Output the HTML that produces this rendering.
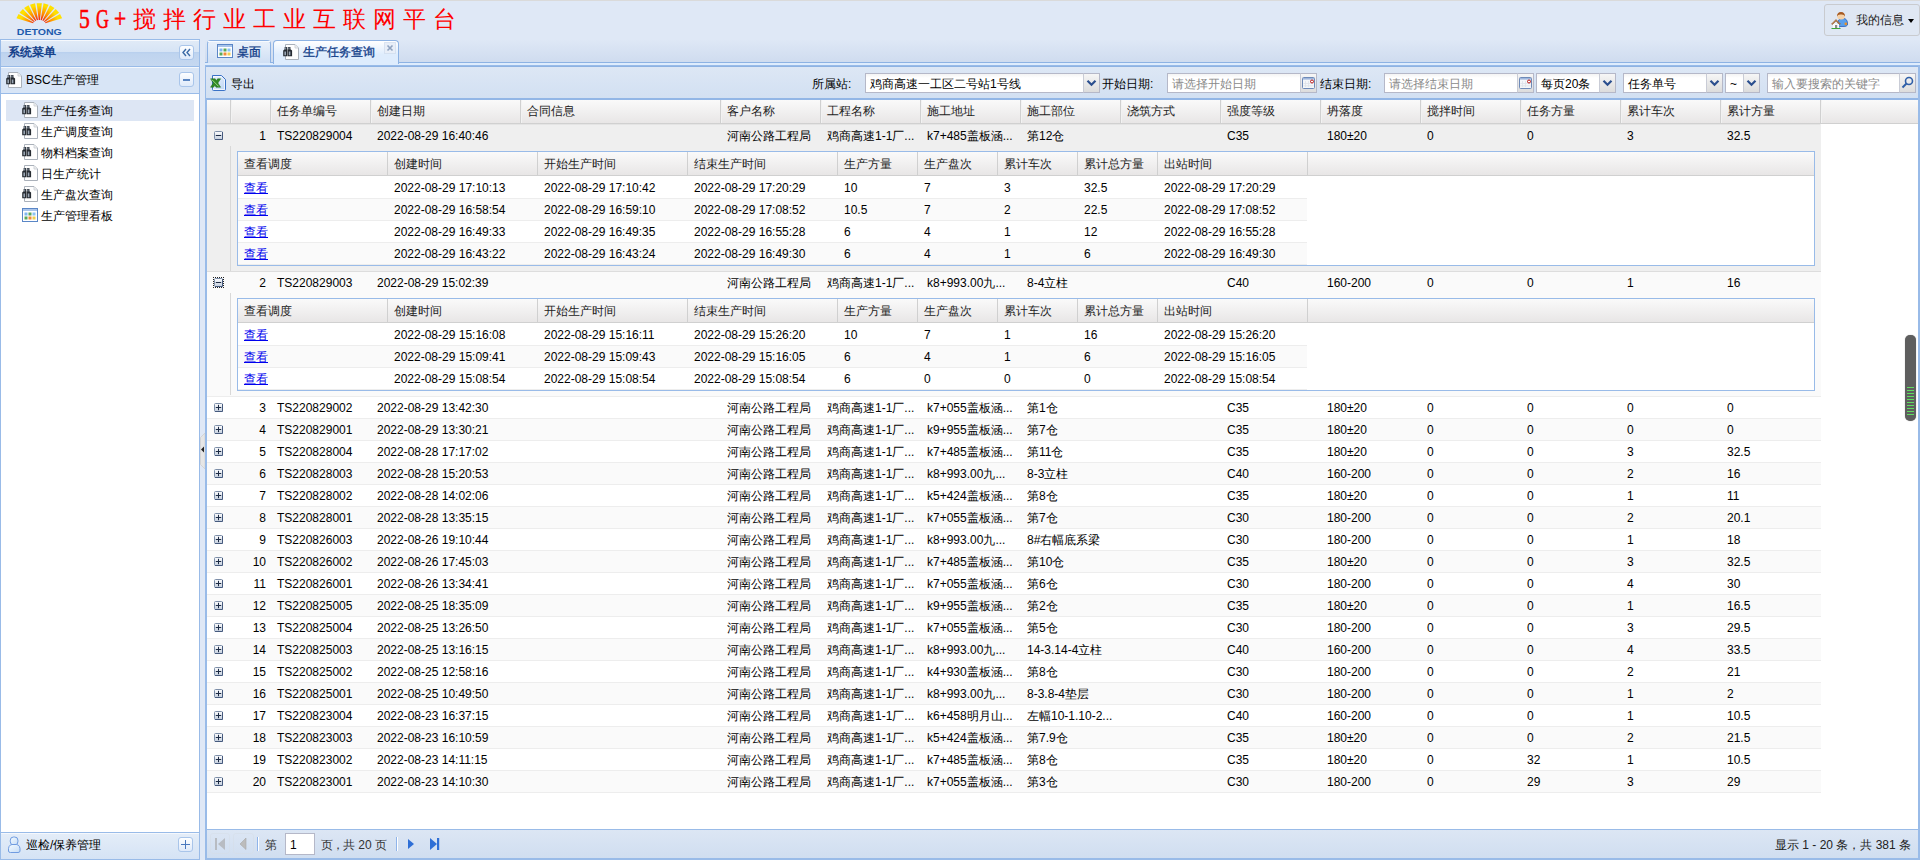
<!DOCTYPE html><html><head><meta charset="utf-8"><title>5G+</title><style>
*{margin:0;padding:0;box-sizing:border-box;}
html,body{width:1920px;height:860px;overflow:hidden;}
body{position:relative;background:#dfe8f6;font-family:"Liberation Sans",sans-serif;font-size:12px;color:#000;}
.a{position:absolute;}
.t{position:absolute;white-space:nowrap;line-height:14px;}
.bd{border:1px solid #99bbe8;}
</style></head><body><div class="a" style="left:0;top:0;width:1920px;height:1px;background:#dadada"></div><svg class="a" style="left:10px;top:0px" width="60" height="40" viewBox="0 0 60 40"><defs><radialGradient id="lg" gradientUnits="userSpaceOnUse" cx="29.3" cy="25" r="23"><stop offset="0.25" stop-color="#ee2a10"/><stop offset="0.5" stop-color="#ff8a00"/><stop offset="0.85" stop-color="#ffe000"/></radialGradient></defs><g fill="url(#lg)"><polygon points="23.15,23.37 6.44,18.31 8.58,13.90 23.61,22.58"/><polygon points="24.01,22.10 9.45,12.63 12.87,8.96 24.74,21.43"/><polygon points="25.30,21.06 14.10,7.98 18.52,5.35 26.25,20.59"/><polygon points="26.92,20.35 20.00,4.72 25.05,3.35 28.00,20.10"/><polygon points="28.73,20.02 26.67,3.13 31.93,3.13 29.87,20.02"/><polygon points="30.60,20.10 33.55,3.35 38.60,4.72 31.68,20.35"/><polygon points="32.35,20.59 40.08,5.35 44.50,7.98 33.30,21.06"/><polygon points="33.86,21.43 45.73,8.96 49.15,12.63 34.59,22.10"/><polygon points="34.99,22.58 50.02,13.90 52.16,18.31 35.45,23.37"/></g><text x="29.3" y="35" text-anchor="middle" font-family="Liberation Sans" font-weight="bold" font-size="9" fill="#1f5cae" textLength="45" lengthAdjust="spacingAndGlyphs">DETONG</text></svg><div class="t" style="left:79px;top:3px;font-family:'Liberation Serif',serif;font-size:27px;line-height:32px;color:#f00;font-weight:normal;-webkit-text-stroke:0.6px #f00;transform:scaleX(0.8);transform-origin:0 0">5</div><div class="t" style="left:96px;top:3px;font-family:'Liberation Serif',serif;font-size:27px;line-height:32px;color:#f00;font-weight:normal;-webkit-text-stroke:0.6px #f00;transform:scaleX(0.66);transform-origin:0 0">G</div><div class="t" style="left:114px;top:3px;font-family:'Liberation Serif',serif;font-size:27px;line-height:32px;color:#f00;font-weight:normal;-webkit-text-stroke:0.6px #f00;transform:scaleX(0.8);transform-origin:0 0">+</div><div class="t" style="left:133px;top:5px;font-family:'Liberation Serif',serif;font-size:23px;line-height:30px;color:#f00;letter-spacing:7px;font-weight:500">搅拌行业工业互联网平台</div><div class="a" style="left:1824px;top:4px;width:96px;height:32px;border:1px solid #c9cbcf;border-radius:3px;background:#dfe7f3"></div><svg class="a" style="left:1831px;top:11px" width="18" height="18" viewBox="0 0 18 18"><path d="M7 17 V12 Q7 7.5 11 7.5 H12.5 Q16 7.5 16.5 12 V14 Q15.5 15.5 13 15.5 H9z" fill="#5aa0ec" stroke="#2c5fb8" stroke-width="0.8"/><circle cx="14.8" cy="12.8" r="1.4" fill="#e8902a"/><rect x="6.2" y="1.5" width="7.6" height="7" rx="3.5" fill="#f6d2a8"/><path d="M6 5.5 Q6 1 10 1 Q14 1 14 5.5 Q13 3 10 3.5 Q7 3 6 5.5z" fill="#a65a22"/><path d="M2 12.5 V17 H8 V12.5z" fill="#fafafa"/><path d="M0.5 13 L5 8.5 L9.5 13 L8.5 13.5 L5 10 L1.5 13.5z" fill="#b57a45" stroke="#9a6335" stroke-width="0.6"/><rect x="4" y="14" width="2.2" height="3" fill="#8a8a8a"/><rect x="0.5" y="17" width="9" height="1" fill="#3aa53a"/></svg><div class="t" style="left:1856px;top:13px;color:#222">我的信息</div><div class="a" style="left:1908px;top:19px;width:0;height:0;border-left:3.5px solid transparent;border-right:3.5px solid transparent;border-top:4px solid #000"></div><div class="a" style="left:0;top:39px;width:200px;height:821px;border:1px solid #99bbe8;border-bottom:none;background:#fff"></div><div class="a" style="left:1px;top:40px;width:198px;height:26px;background:linear-gradient(to bottom,#e0eaf7 0%,#d6e4f5 44%,#b9d0ee 46%,#bfd4ef 52%,#c5d8f0 100%);border-top:1px solid #f6f9fd"></div><div class="a" style="left:1px;top:66px;width:198px;height:1px;background:#99bbe8"></div><div class="t" style="left:8px;top:45px;font-weight:bold;color:#15428b">系统菜单</div><div class="a" style="left:179px;top:45px;width:15px;height:15px;border:1px solid #a9c5ea;border-radius:3px;background:linear-gradient(#fdfeff,#dfeafa)"></div><svg class="a" style="left:179px;top:45px" width="15" height="15" viewBox="0 0 15 15"><path d="M7 4 L4 7.5 L7 11 M11 4 L8 7.5 L11 11" fill="none" stroke="#3b6aa6" stroke-width="1.4"/></svg><div class="a" style="left:1px;top:67px;width:198px;height:26px;background:#d8e5f6;border-top:1px solid #f4f8fd"></div><div class="a" style="left:1px;top:93px;width:198px;height:1px;background:#99bbe8"></div><svg class="a" style="left:6px;top:72px" width="16" height="16" viewBox="0 0 16 16"><path d="M2.5 0.5 H12 L15.5 4 V15.5 H2.5z" fill="#fefefe" stroke="#aab1ba"/><path d="M12 0.8 V4 H15.2" fill="#f0f0f0" stroke="#c6ccd3" stroke-width="0.8"/><path d="M1.6 3 h2.6 v3 h-2.6z M4.9 3 h2.6 v3 h-2.6z" fill="#3a4048"/><path d="M0.2 12.2 V6.5 L1.4 5.6 h3 v6.6z M4.8 12.2 V5.6 h3 l1.3 0.9 v5.7z" fill="#262b31"/><path d="M1.4 7.5 h1.6 v3.8 h-1.6z M5.8 7.5 h1.6 v3.8 h-1.6z" fill="#9aa6b4"/><path d="M2 3.6 h1 v1.8 h-1z M5.4 3.6 h1 v1.8 h-1z" fill="#7d8a99"/></svg><div class="t" style="left:26px;top:73px;">BSC生产管理</div><div class="a" style="left:179px;top:72px;width:15px;height:15px;border:1px solid #a9c5ea;border-radius:3px;background:linear-gradient(#fdfeff,#dfeafa)"></div><div class="a" style="left:183px;top:79px;width:7px;height:2px;background:#5b86c2"></div><div class="a" style="left:6px;top:100px;width:188px;height:21px;background:#dde6f4"></div><svg class="a" style="left:22px;top:102px" width="16" height="16" viewBox="0 0 16 16"><path d="M2.5 0.5 H12 L15.5 4 V15.5 H2.5z" fill="#fefefe" stroke="#aab1ba"/><path d="M12 0.8 V4 H15.2" fill="#f0f0f0" stroke="#c6ccd3" stroke-width="0.8"/><path d="M1.6 3 h2.6 v3 h-2.6z M4.9 3 h2.6 v3 h-2.6z" fill="#3a4048"/><path d="M0.2 12.2 V6.5 L1.4 5.6 h3 v6.6z M4.8 12.2 V5.6 h3 l1.3 0.9 v5.7z" fill="#262b31"/><path d="M1.4 7.5 h1.6 v3.8 h-1.6z M5.8 7.5 h1.6 v3.8 h-1.6z" fill="#9aa6b4"/><path d="M2 3.6 h1 v1.8 h-1z M5.4 3.6 h1 v1.8 h-1z" fill="#7d8a99"/></svg><div class="t" style="left:41px;top:104px;">生产任务查询</div><svg class="a" style="left:22px;top:123px" width="16" height="16" viewBox="0 0 16 16"><path d="M2.5 0.5 H12 L15.5 4 V15.5 H2.5z" fill="#fefefe" stroke="#aab1ba"/><path d="M12 0.8 V4 H15.2" fill="#f0f0f0" stroke="#c6ccd3" stroke-width="0.8"/><path d="M1.6 3 h2.6 v3 h-2.6z M4.9 3 h2.6 v3 h-2.6z" fill="#3a4048"/><path d="M0.2 12.2 V6.5 L1.4 5.6 h3 v6.6z M4.8 12.2 V5.6 h3 l1.3 0.9 v5.7z" fill="#262b31"/><path d="M1.4 7.5 h1.6 v3.8 h-1.6z M5.8 7.5 h1.6 v3.8 h-1.6z" fill="#9aa6b4"/><path d="M2 3.6 h1 v1.8 h-1z M5.4 3.6 h1 v1.8 h-1z" fill="#7d8a99"/></svg><div class="t" style="left:41px;top:125px;">生产调度查询</div><svg class="a" style="left:22px;top:144px" width="16" height="16" viewBox="0 0 16 16"><path d="M2.5 0.5 H12 L15.5 4 V15.5 H2.5z" fill="#fefefe" stroke="#aab1ba"/><path d="M12 0.8 V4 H15.2" fill="#f0f0f0" stroke="#c6ccd3" stroke-width="0.8"/><path d="M1.6 3 h2.6 v3 h-2.6z M4.9 3 h2.6 v3 h-2.6z" fill="#3a4048"/><path d="M0.2 12.2 V6.5 L1.4 5.6 h3 v6.6z M4.8 12.2 V5.6 h3 l1.3 0.9 v5.7z" fill="#262b31"/><path d="M1.4 7.5 h1.6 v3.8 h-1.6z M5.8 7.5 h1.6 v3.8 h-1.6z" fill="#9aa6b4"/><path d="M2 3.6 h1 v1.8 h-1z M5.4 3.6 h1 v1.8 h-1z" fill="#7d8a99"/></svg><div class="t" style="left:41px;top:146px;">物料档案查询</div><svg class="a" style="left:22px;top:165px" width="16" height="16" viewBox="0 0 16 16"><path d="M2.5 0.5 H12 L15.5 4 V15.5 H2.5z" fill="#fefefe" stroke="#aab1ba"/><path d="M12 0.8 V4 H15.2" fill="#f0f0f0" stroke="#c6ccd3" stroke-width="0.8"/><path d="M1.6 3 h2.6 v3 h-2.6z M4.9 3 h2.6 v3 h-2.6z" fill="#3a4048"/><path d="M0.2 12.2 V6.5 L1.4 5.6 h3 v6.6z M4.8 12.2 V5.6 h3 l1.3 0.9 v5.7z" fill="#262b31"/><path d="M1.4 7.5 h1.6 v3.8 h-1.6z M5.8 7.5 h1.6 v3.8 h-1.6z" fill="#9aa6b4"/><path d="M2 3.6 h1 v1.8 h-1z M5.4 3.6 h1 v1.8 h-1z" fill="#7d8a99"/></svg><div class="t" style="left:41px;top:167px;">日生产统计</div><svg class="a" style="left:22px;top:186px" width="16" height="16" viewBox="0 0 16 16"><path d="M2.5 0.5 H12 L15.5 4 V15.5 H2.5z" fill="#fefefe" stroke="#aab1ba"/><path d="M12 0.8 V4 H15.2" fill="#f0f0f0" stroke="#c6ccd3" stroke-width="0.8"/><path d="M1.6 3 h2.6 v3 h-2.6z M4.9 3 h2.6 v3 h-2.6z" fill="#3a4048"/><path d="M0.2 12.2 V6.5 L1.4 5.6 h3 v6.6z M4.8 12.2 V5.6 h3 l1.3 0.9 v5.7z" fill="#262b31"/><path d="M1.4 7.5 h1.6 v3.8 h-1.6z M5.8 7.5 h1.6 v3.8 h-1.6z" fill="#9aa6b4"/><path d="M2 3.6 h1 v1.8 h-1z M5.4 3.6 h1 v1.8 h-1z" fill="#7d8a99"/></svg><div class="t" style="left:41px;top:188px;">生产盘次查询</div><svg class="a" style="left:22px;top:207px" width="16" height="16" viewBox="0 0 16 16"><rect x="0.5" y="1.5" width="15" height="13" fill="#fff" stroke="#5a86c6"/><rect x="1" y="2" width="14" height="2" fill="#a9c4ea"/><rect x="2.5" y="5.5" width="3" height="3" fill="#7fb7f0"/><rect x="6.5" y="5.5" width="3" height="3" fill="#5aa85a"/><rect x="10.5" y="5.5" width="3" height="3" fill="#8cc4f4"/><rect x="2.5" y="9.5" width="3" height="3" fill="#5aa85a"/><rect x="6.5" y="9.5" width="3" height="3" fill="#f08a3a"/><rect x="10.5" y="9.5" width="3" height="3" fill="#eed050"/></svg><div class="t" style="left:41px;top:209px;">生产管理看板</div><div class="a" style="left:1px;top:832px;width:198px;height:28px;background:linear-gradient(#e4edf8,#d5e3f5);border-top:1px solid #99bbe8;border-bottom:1px solid #99bbe8"></div><div class="a" style="left:1px;top:833px;width:198px;height:1px;background:#f5f8fd"></div><svg class="a" style="left:7px;top:836px" width="15" height="18" viewBox="0 0 15 18"><defs><linearGradient id="pg" x1="0" y1="0" x2="1" y2="1"><stop offset="0" stop-color="#f4fbff"/><stop offset="1" stop-color="#c6dcf6"/></linearGradient></defs><rect x="3.3" y="1" width="7.6" height="8" rx="3.2" fill="url(#pg)" stroke="#6f9be0"/><path d="M1.5 15 Q1 9 5 8.5 H9.5 Q13.5 9 13 15 Q13 16.5 11 16.5 H3.5 Q1.5 16.5 1.5 15z" fill="url(#pg)" stroke="#6f9be0"/></svg><div class="t" style="left:26px;top:838px;">巡检/保养管理</div><div class="a" style="left:178px;top:837px;width:15px;height:15px;border:1px solid #a9c5ea;border-radius:3px;background:linear-gradient(#fdfeff,#dfeafa)"></div><div class="a" style="left:181px;top:844px;width:9px;height:1px;background:#4a78be"></div><div class="a" style="left:185px;top:840px;width:1px;height:9px;background:#4a78be"></div><svg class="a" style="left:200px;top:433px" width="5" height="36" viewBox="0 0 5 36"><path d="M5 0 L0.5 4.5 V31.5 L5 36z" fill="#e6e6e6" stroke="#cfcfcf" stroke-width="0.8"/><path d="M1 16.5 L4 13.5 V19.5z" fill="#222"/></svg><div class="a" style="left:205px;top:39px;width:1715px;height:23px;background:linear-gradient(#dfe8f6,#cfdcef)"></div><div class="a" style="left:205px;top:62px;width:1715px;height:1px;background:#8db2e3"></div><div class="a" style="left:205px;top:63px;width:1715px;height:3px;background:#deecfd"></div><div class="a" style="left:207px;top:40px;width:64px;height:23px;border:1px solid #8db2e3;border-bottom:none;border-radius:4px 4px 0 0;background:linear-gradient(#eaf1fb,#cfdff4)"></div><div class="a" style="left:208px;top:41px;width:62px;height:1px;background:#f8fbfe"></div><svg class="a" style="left:217px;top:43px" width="16" height="16" viewBox="0 0 16 16"><rect x="0.5" y="1.5" width="15" height="13" fill="#fff" stroke="#5a86c6"/><rect x="1" y="2" width="14" height="2" fill="#a9c4ea"/><rect x="2.5" y="5.5" width="3" height="3" fill="#7fb7f0"/><rect x="6.5" y="5.5" width="3" height="3" fill="#5aa85a"/><rect x="10.5" y="5.5" width="3" height="3" fill="#8cc4f4"/><rect x="2.5" y="9.5" width="3" height="3" fill="#5aa85a"/><rect x="6.5" y="9.5" width="3" height="3" fill="#f08a3a"/><rect x="10.5" y="9.5" width="3" height="3" fill="#eed050"/></svg><div class="t" style="left:237px;top:45px;color:#15428b;-webkit-text-stroke:0.35px #15428b">桌面</div><div class="a" style="left:273px;top:40px;width:126px;height:24px;border:1px solid #8db2e3;border-bottom:none;border-radius:4px 4px 0 0;background:linear-gradient(#ffffff,#deecfd 60%)"></div><svg class="a" style="left:283px;top:44px" width="16" height="16" viewBox="0 0 16 16"><path d="M2.5 0.5 H12 L15.5 4 V15.5 H2.5z" fill="#fefefe" stroke="#aab1ba"/><path d="M12 0.8 V4 H15.2" fill="#f0f0f0" stroke="#c6ccd3" stroke-width="0.8"/><path d="M1.6 3 h2.6 v3 h-2.6z M4.9 3 h2.6 v3 h-2.6z" fill="#3a4048"/><path d="M0.2 12.2 V6.5 L1.4 5.6 h3 v6.6z M4.8 12.2 V5.6 h3 l1.3 0.9 v5.7z" fill="#262b31"/><path d="M1.4 7.5 h1.6 v3.8 h-1.6z M5.8 7.5 h1.6 v3.8 h-1.6z" fill="#9aa6b4"/><path d="M2 3.6 h1 v1.8 h-1z M5.4 3.6 h1 v1.8 h-1z" fill="#7d8a99"/></svg><div class="t" style="left:303px;top:45px;color:#15428b;-webkit-text-stroke:0.35px #15428b">生产任务查询</div><svg class="a" style="left:384px;top:42px" width="12" height="12" viewBox="0 0 12 12"><rect x="0.5" y="0.5" width="11" height="11" fill="#e8eef8" stroke="#c5d3e6" stroke-dasharray="1 1"/><path d="M3.5 3.5 L8.5 8.5 M8.5 3.5 L3.5 8.5" stroke="#8fa3c0" stroke-width="1.6"/></svg><div class="a" style="left:205px;top:65px;width:1715px;height:795px;border:1px solid #99bbe8;border-right:none;border-bottom:none;background:#fff"></div><div class="a" style="left:1918px;top:65px;width:1px;height:795px;background:#99bbe8"></div><div class="a" style="left:206px;top:99px;width:1px;height:761px;background:#99bbe8;z-index:5"></div><div class="a" style="left:1919px;top:65px;width:1px;height:795px;background:#99bbe8;z-index:6"></div><div class="a" style="left:206px;top:66px;width:1712px;height:34px;background:linear-gradient(#dde7f5,#d2e0f2);border-bottom:2px solid #92b6e6;border-top:1px solid #8db2e3"></div><svg class="a" style="left:210px;top:75px" width="16" height="16" viewBox="0 0 16 16"><defs><linearGradient id="xg" x1="0" y1="0" x2="1" y2="1"><stop offset="0" stop-color="#eef5fd"/><stop offset="1" stop-color="#bcd4f4"/></linearGradient></defs><path d="M2.5 0.5 H11.5 L15.5 4.5 V14.5 Q15.5 15.5 14.5 15.5 H3.5 Q2.5 15.5 2.5 14.5z" fill="url(#xg)" stroke="#3a72c6"/><path d="M3.5 1.5 H11 L14.5 5 V14.5 H3.5z" fill="none" stroke="#ffffff" stroke-width="0.7"/><path d="M0.6 3.8 H5.2 L6.3 5.8 L7.6 3.8 H10.6 L7.9 8 L10.6 12.2 H6 L4.9 10.2 L3.6 12.2 H0.6 L3.3 8z" fill="#2f8a24" stroke="#1f6a18" stroke-width="0.5"/><path d="M1.8 4.6 L8.6 11.4" stroke="#b8e6a0" stroke-width="0.8"/></svg><div class="t" style="left:231px;top:77px;">导出</div><div class="t" style="left:812px;top:77px;">所属站:</div><div class="a" style="left:865px;top:73px;width:235px;height:20px;border:1px solid #b5b8c8;background:linear-gradient(#f4f4f4,#fff 4px)"></div><div class="t" style="left:870px;top:77px;color:#000">鸡商高速一工区二号站1号线</div><div class="a" style="left:1083px;top:73px;width:17px;height:20px;border:1px solid #b5b8c8;border-left:1px solid #c9ccd6;background:linear-gradient(#f6f6f6,#dcdcdc)"></div><svg class="a" style="left:1083px;top:73px" width="17" height="20" viewBox="0 0 17 20"><path d="M4.5 7.8 L8.5 11.8 L12.5 7.8" fill="none" stroke="#2b4f8e" stroke-width="2.2"/></svg><div class="t" style="left:1102px;top:77px;">开始日期:</div><div class="a" style="left:1167px;top:73px;width:150px;height:20px;border:1px solid #b5b8c8;background:linear-gradient(#f4f4f4,#fff 4px)"></div><div class="t" style="left:1172px;top:77px;color:#8a8a8a">请选择开始日期</div><div class="a" style="left:1300px;top:73px;width:17px;height:20px;border:1px solid #b5b8c8;border-left:1px solid #c9ccd6;background:linear-gradient(#f6f6f6,#dcdcdc)"></div><svg class="a" style="left:1300px;top:73px" width="17" height="20" viewBox="0 0 17 20"><rect x="2.5" y="4.5" width="12" height="11" rx="1" fill="#f4f6f9" stroke="#6e8ab8"/><rect x="3" y="5" width="11" height="1.6" fill="#9fb6dc"/><path d="M5.5 8 v6 M8.5 8 v6 M3.5 10.5 h10 M3.5 12.8 h10" stroke="#dde2ea" stroke-width="0.8"/><circle cx="12" cy="8.5" r="1.5" fill="#fff" stroke="#b00000" stroke-width="0.9"/></svg><div class="t" style="left:1320px;top:77px;">结束日期:</div><div class="a" style="left:1384px;top:73px;width:150px;height:20px;border:1px solid #b5b8c8;background:linear-gradient(#f4f4f4,#fff 4px)"></div><div class="t" style="left:1389px;top:77px;color:#8a8a8a">请选择结束日期</div><div class="a" style="left:1517px;top:73px;width:17px;height:20px;border:1px solid #b5b8c8;border-left:1px solid #c9ccd6;background:linear-gradient(#f6f6f6,#dcdcdc)"></div><svg class="a" style="left:1517px;top:73px" width="17" height="20" viewBox="0 0 17 20"><rect x="2.5" y="4.5" width="12" height="11" rx="1" fill="#f4f6f9" stroke="#6e8ab8"/><rect x="3" y="5" width="11" height="1.6" fill="#9fb6dc"/><path d="M5.5 8 v6 M8.5 8 v6 M3.5 10.5 h10 M3.5 12.8 h10" stroke="#dde2ea" stroke-width="0.8"/><circle cx="12" cy="8.5" r="1.5" fill="#fff" stroke="#b00000" stroke-width="0.9"/></svg><div class="a" style="left:1536px;top:73px;width:80px;height:20px;border:1px solid #b5b8c8;background:linear-gradient(#f4f4f4,#fff 4px)"></div><div class="t" style="left:1541px;top:77px;color:#000">每页20条</div><div class="a" style="left:1599px;top:73px;width:17px;height:20px;border:1px solid #b5b8c8;border-left:1px solid #c9ccd6;background:linear-gradient(#f6f6f6,#dcdcdc)"></div><svg class="a" style="left:1599px;top:73px" width="17" height="20" viewBox="0 0 17 20"><path d="M4.5 7.8 L8.5 11.8 L12.5 7.8" fill="none" stroke="#2b4f8e" stroke-width="2.2"/></svg><div class="a" style="left:1623px;top:73px;width:100px;height:20px;border:1px solid #b5b8c8;background:linear-gradient(#f4f4f4,#fff 4px)"></div><div class="t" style="left:1628px;top:77px;color:#000">任务单号</div><div class="a" style="left:1706px;top:73px;width:17px;height:20px;border:1px solid #b5b8c8;border-left:1px solid #c9ccd6;background:linear-gradient(#f6f6f6,#dcdcdc)"></div><svg class="a" style="left:1706px;top:73px" width="17" height="20" viewBox="0 0 17 20"><path d="M4.5 7.8 L8.5 11.8 L12.5 7.8" fill="none" stroke="#2b4f8e" stroke-width="2.2"/></svg><div class="a" style="left:1725px;top:73px;width:35px;height:20px;border:1px solid #b5b8c8;background:linear-gradient(#f4f4f4,#fff 4px)"></div><div class="t" style="left:1730px;top:77px;color:#000">~</div><div class="a" style="left:1743px;top:73px;width:17px;height:20px;border:1px solid #b5b8c8;border-left:1px solid #c9ccd6;background:linear-gradient(#f6f6f6,#dcdcdc)"></div><svg class="a" style="left:1743px;top:73px" width="17" height="20" viewBox="0 0 17 20"><path d="M4.5 7.8 L8.5 11.8 L12.5 7.8" fill="none" stroke="#2b4f8e" stroke-width="2.2"/></svg><div class="a" style="left:1767px;top:73px;width:149px;height:20px;border:1px solid #b5b8c8;background:linear-gradient(#f4f4f4,#fff 4px)"></div><div class="t" style="left:1772px;top:77px;color:#8a8a8a">输入要搜索的关键字</div><div class="a" style="left:1899px;top:73px;width:17px;height:20px;border:1px solid #b5b8c8;border-left:1px solid #c9ccd6;background:linear-gradient(#f6f6f6,#dcdcdc)"></div><svg class="a" style="left:1899px;top:73px" width="17" height="20" viewBox="0 0 17 20"><circle cx="10" cy="8" r="3.5" fill="none" stroke="#2f5fa8" stroke-width="1.6"/><path d="M7.5 10.5 L3.5 14.5" stroke="#2f5fa8" stroke-width="2"/></svg><div class="a" style="left:206px;top:100px;width:1712px;height:24px;background:linear-gradient(#fafafa,#e8e6e6);border-bottom:1px solid #d0d0d0"></div><div class="a" style="left:230px;top:100px;width:1px;height:23px;background:#d0d0d0"></div><div class="a" style="left:231px;top:100px;width:1px;height:23px;background:#f2f2f2"></div><div class="a" style="left:270px;top:100px;width:1px;height:23px;background:#d0d0d0"></div><div class="a" style="left:271px;top:100px;width:1px;height:23px;background:#f2f2f2"></div><div class="a" style="left:370px;top:100px;width:1px;height:23px;background:#d0d0d0"></div><div class="a" style="left:371px;top:100px;width:1px;height:23px;background:#f2f2f2"></div><div class="t" style="left:277px;top:104px;color:#222">任务单编号</div><div class="a" style="left:520px;top:100px;width:1px;height:23px;background:#d0d0d0"></div><div class="a" style="left:521px;top:100px;width:1px;height:23px;background:#f2f2f2"></div><div class="t" style="left:377px;top:104px;color:#222">创建日期</div><div class="a" style="left:720px;top:100px;width:1px;height:23px;background:#d0d0d0"></div><div class="a" style="left:721px;top:100px;width:1px;height:23px;background:#f2f2f2"></div><div class="t" style="left:527px;top:104px;color:#222">合同信息</div><div class="a" style="left:820px;top:100px;width:1px;height:23px;background:#d0d0d0"></div><div class="a" style="left:821px;top:100px;width:1px;height:23px;background:#f2f2f2"></div><div class="t" style="left:727px;top:104px;color:#222">客户名称</div><div class="a" style="left:920px;top:100px;width:1px;height:23px;background:#d0d0d0"></div><div class="a" style="left:921px;top:100px;width:1px;height:23px;background:#f2f2f2"></div><div class="t" style="left:827px;top:104px;color:#222">工程名称</div><div class="a" style="left:1020px;top:100px;width:1px;height:23px;background:#d0d0d0"></div><div class="a" style="left:1021px;top:100px;width:1px;height:23px;background:#f2f2f2"></div><div class="t" style="left:927px;top:104px;color:#222">施工地址</div><div class="a" style="left:1120px;top:100px;width:1px;height:23px;background:#d0d0d0"></div><div class="a" style="left:1121px;top:100px;width:1px;height:23px;background:#f2f2f2"></div><div class="t" style="left:1027px;top:104px;color:#222">施工部位</div><div class="a" style="left:1220px;top:100px;width:1px;height:23px;background:#d0d0d0"></div><div class="a" style="left:1221px;top:100px;width:1px;height:23px;background:#f2f2f2"></div><div class="t" style="left:1127px;top:104px;color:#222">浇筑方式</div><div class="a" style="left:1320px;top:100px;width:1px;height:23px;background:#d0d0d0"></div><div class="a" style="left:1321px;top:100px;width:1px;height:23px;background:#f2f2f2"></div><div class="t" style="left:1227px;top:104px;color:#222">强度等级</div><div class="a" style="left:1420px;top:100px;width:1px;height:23px;background:#d0d0d0"></div><div class="a" style="left:1421px;top:100px;width:1px;height:23px;background:#f2f2f2"></div><div class="t" style="left:1327px;top:104px;color:#222">坍落度</div><div class="a" style="left:1520px;top:100px;width:1px;height:23px;background:#d0d0d0"></div><div class="a" style="left:1521px;top:100px;width:1px;height:23px;background:#f2f2f2"></div><div class="t" style="left:1427px;top:104px;color:#222">搅拌时间</div><div class="a" style="left:1620px;top:100px;width:1px;height:23px;background:#d0d0d0"></div><div class="a" style="left:1621px;top:100px;width:1px;height:23px;background:#f2f2f2"></div><div class="t" style="left:1527px;top:104px;color:#222">任务方量</div><div class="a" style="left:1720px;top:100px;width:1px;height:23px;background:#d0d0d0"></div><div class="a" style="left:1721px;top:100px;width:1px;height:23px;background:#f2f2f2"></div><div class="t" style="left:1627px;top:104px;color:#222">累计车次</div><div class="a" style="left:1820px;top:100px;width:1px;height:23px;background:#d0d0d0"></div><div class="a" style="left:1821px;top:100px;width:1px;height:23px;background:#f2f2f2"></div><div class="t" style="left:1727px;top:104px;color:#222">累计方量</div><div class="a" style="left:206px;top:124px;width:1615px;height:148px;background:#efefef;border-bottom:1px solid #dddddd"></div><svg class="a" style="left:214px;top:131px" width="9" height="9" viewBox="0 0 9 9"><defs><linearGradient id="eg214_131" x1="0" y1="0" x2="0" y2="1"><stop offset="0" stop-color="#fdfdfe"/><stop offset="1" stop-color="#c3cedd"/></linearGradient></defs><rect x="0.5" y="0.5" width="8" height="8" rx="1" fill="url(#eg214_131)" stroke="#7d8ea8"/><path d="M1 8.5 H8.5 V1" fill="none" stroke="#3e5478" stroke-width="0.9"/><rect x="1.8" y="4" width="5.4" height="1" fill="#1c2a44"/></svg><div class="t" style="left:230px;top:129px;width:36px;text-align:right">1</div><div class="t" style="left:277px;top:129px">TS220829004</div><div class="t" style="left:377px;top:129px">2022-08-29 16:40:46</div><div class="t" style="left:727px;top:129px">河南公路工程局</div><div class="t" style="left:827px;top:129px">鸡商高速1-1厂...</div><div class="t" style="left:927px;top:129px">k7+485盖板涵...</div><div class="t" style="left:1027px;top:129px">第12仓</div><div class="t" style="left:1227px;top:129px">C35</div><div class="t" style="left:1327px;top:129px">180±20</div><div class="t" style="left:1427px;top:129px">0</div><div class="t" style="left:1527px;top:129px">0</div><div class="t" style="left:1627px;top:129px">3</div><div class="t" style="left:1727px;top:129px">32.5</div><div class="a" style="left:206px;top:124px;width:1614px;height:1px;background:#e4e4e4"></div><div class="a" style="left:230px;top:146px;width:1px;height:125px;background:#d8d8d8"></div><div class="a" style="left:237px;top:151px;width:1578px;height:115px;border:1px solid #99bbe8;background:#fff"></div><div class="a" style="left:238px;top:152px;width:1576px;height:24px;background:linear-gradient(#fafafa,#e8e6e6);border-bottom:1px solid #d0d0d0"></div><div class="a" style="left:387px;top:152px;width:1px;height:23px;background:#d0d0d0"></div><div class="t" style="left:244px;top:157px;color:#222">查看调度</div><div class="a" style="left:537px;top:152px;width:1px;height:23px;background:#d0d0d0"></div><div class="t" style="left:394px;top:157px;color:#222">创建时间</div><div class="a" style="left:687px;top:152px;width:1px;height:23px;background:#d0d0d0"></div><div class="t" style="left:544px;top:157px;color:#222">开始生产时间</div><div class="a" style="left:837px;top:152px;width:1px;height:23px;background:#d0d0d0"></div><div class="t" style="left:694px;top:157px;color:#222">结束生产时间</div><div class="a" style="left:917px;top:152px;width:1px;height:23px;background:#d0d0d0"></div><div class="t" style="left:844px;top:157px;color:#222">生产方量</div><div class="a" style="left:997px;top:152px;width:1px;height:23px;background:#d0d0d0"></div><div class="t" style="left:924px;top:157px;color:#222">生产盘次</div><div class="a" style="left:1077px;top:152px;width:1px;height:23px;background:#d0d0d0"></div><div class="t" style="left:1004px;top:157px;color:#222">累计车次</div><div class="a" style="left:1157px;top:152px;width:1px;height:23px;background:#d0d0d0"></div><div class="t" style="left:1084px;top:157px;color:#222">累计总方量</div><div class="a" style="left:1307px;top:152px;width:1px;height:23px;background:#d0d0d0"></div><div class="t" style="left:1164px;top:157px;color:#222">出站时间</div><div class="a" style="left:1307px;top:152px;width:1px;height:23px;background:#d0d0d0"></div><div class="a" style="left:238px;top:177px;width:1069px;height:22px;background:#fff;border-bottom:1px solid #ededed"></div><div class="t" style="left:244px;top:181px;color:#0000ee;text-decoration:underline">查看</div><div class="t" style="left:394px;top:181px">2022-08-29 17:10:13</div><div class="t" style="left:544px;top:181px">2022-08-29 17:10:42</div><div class="t" style="left:694px;top:181px">2022-08-29 17:20:29</div><div class="t" style="left:844px;top:181px">10</div><div class="t" style="left:924px;top:181px">7</div><div class="t" style="left:1004px;top:181px">3</div><div class="t" style="left:1084px;top:181px">32.5</div><div class="t" style="left:1164px;top:181px">2022-08-29 17:20:29</div><div class="a" style="left:238px;top:199px;width:1069px;height:22px;background:#fafafa;border-bottom:1px solid #ededed"></div><div class="t" style="left:244px;top:203px;color:#0000ee;text-decoration:underline">查看</div><div class="t" style="left:394px;top:203px">2022-08-29 16:58:54</div><div class="t" style="left:544px;top:203px">2022-08-29 16:59:10</div><div class="t" style="left:694px;top:203px">2022-08-29 17:08:52</div><div class="t" style="left:844px;top:203px">10.5</div><div class="t" style="left:924px;top:203px">7</div><div class="t" style="left:1004px;top:203px">2</div><div class="t" style="left:1084px;top:203px">22.5</div><div class="t" style="left:1164px;top:203px">2022-08-29 17:08:52</div><div class="a" style="left:238px;top:221px;width:1069px;height:22px;background:#fff;border-bottom:1px solid #ededed"></div><div class="t" style="left:244px;top:225px;color:#0000ee;text-decoration:underline">查看</div><div class="t" style="left:394px;top:225px">2022-08-29 16:49:33</div><div class="t" style="left:544px;top:225px">2022-08-29 16:49:35</div><div class="t" style="left:694px;top:225px">2022-08-29 16:55:28</div><div class="t" style="left:844px;top:225px">6</div><div class="t" style="left:924px;top:225px">4</div><div class="t" style="left:1004px;top:225px">1</div><div class="t" style="left:1084px;top:225px">12</div><div class="t" style="left:1164px;top:225px">2022-08-29 16:55:28</div><div class="a" style="left:238px;top:243px;width:1069px;height:22px;background:#fafafa;border-bottom:1px solid #ededed"></div><div class="t" style="left:244px;top:247px;color:#0000ee;text-decoration:underline">查看</div><div class="t" style="left:394px;top:247px">2022-08-29 16:43:22</div><div class="t" style="left:544px;top:247px">2022-08-29 16:43:24</div><div class="t" style="left:694px;top:247px">2022-08-29 16:49:30</div><div class="t" style="left:844px;top:247px">6</div><div class="t" style="left:924px;top:247px">4</div><div class="t" style="left:1004px;top:247px">1</div><div class="t" style="left:1084px;top:247px">6</div><div class="t" style="left:1164px;top:247px">2022-08-29 16:49:30</div><div class="a" style="left:206px;top:272px;width:1615px;height:125px;background:#fafafa;border-bottom:1px solid #ededed"></div><svg class="a" style="left:214px;top:278px" width="9" height="9" viewBox="0 0 9 9"><defs><linearGradient id="eg214_278" x1="0" y1="0" x2="0" y2="1"><stop offset="0" stop-color="#fdfdfe"/><stop offset="1" stop-color="#c3cedd"/></linearGradient></defs><rect x="0.5" y="0.5" width="8" height="8" rx="1" fill="url(#eg214_278)" stroke="#7d8ea8"/><path d="M1 8.5 H8.5 V1" fill="none" stroke="#3e5478" stroke-width="0.9"/><rect x="1.8" y="4" width="5.4" height="1" fill="#1c2a44"/></svg><div class="a" style="left:213px;top:277px;width:11px;height:11px;border:1px dotted #222"></div><div class="t" style="left:230px;top:276px;width:36px;text-align:right">2</div><div class="t" style="left:277px;top:276px">TS220829003</div><div class="t" style="left:377px;top:276px">2022-08-29 15:02:39</div><div class="t" style="left:727px;top:276px">河南公路工程局</div><div class="t" style="left:827px;top:276px">鸡商高速1-1厂...</div><div class="t" style="left:927px;top:276px">k8+993.00九...</div><div class="t" style="left:1027px;top:276px">8-4立柱</div><div class="t" style="left:1227px;top:276px">C40</div><div class="t" style="left:1327px;top:276px">160-200</div><div class="t" style="left:1427px;top:276px">0</div><div class="t" style="left:1527px;top:276px">0</div><div class="t" style="left:1627px;top:276px">1</div><div class="t" style="left:1727px;top:276px">16</div><div class="a" style="left:230px;top:293px;width:1px;height:102px;background:#d8d8d8"></div><div class="a" style="left:237px;top:298px;width:1578px;height:93px;border:1px solid #99bbe8;background:#fff"></div><div class="a" style="left:238px;top:299px;width:1576px;height:24px;background:linear-gradient(#fafafa,#e8e6e6);border-bottom:1px solid #d0d0d0"></div><div class="a" style="left:387px;top:299px;width:1px;height:23px;background:#d0d0d0"></div><div class="t" style="left:244px;top:304px;color:#222">查看调度</div><div class="a" style="left:537px;top:299px;width:1px;height:23px;background:#d0d0d0"></div><div class="t" style="left:394px;top:304px;color:#222">创建时间</div><div class="a" style="left:687px;top:299px;width:1px;height:23px;background:#d0d0d0"></div><div class="t" style="left:544px;top:304px;color:#222">开始生产时间</div><div class="a" style="left:837px;top:299px;width:1px;height:23px;background:#d0d0d0"></div><div class="t" style="left:694px;top:304px;color:#222">结束生产时间</div><div class="a" style="left:917px;top:299px;width:1px;height:23px;background:#d0d0d0"></div><div class="t" style="left:844px;top:304px;color:#222">生产方量</div><div class="a" style="left:997px;top:299px;width:1px;height:23px;background:#d0d0d0"></div><div class="t" style="left:924px;top:304px;color:#222">生产盘次</div><div class="a" style="left:1077px;top:299px;width:1px;height:23px;background:#d0d0d0"></div><div class="t" style="left:1004px;top:304px;color:#222">累计车次</div><div class="a" style="left:1157px;top:299px;width:1px;height:23px;background:#d0d0d0"></div><div class="t" style="left:1084px;top:304px;color:#222">累计总方量</div><div class="a" style="left:1307px;top:299px;width:1px;height:23px;background:#d0d0d0"></div><div class="t" style="left:1164px;top:304px;color:#222">出站时间</div><div class="a" style="left:1307px;top:299px;width:1px;height:23px;background:#d0d0d0"></div><div class="a" style="left:238px;top:324px;width:1069px;height:22px;background:#fff;border-bottom:1px solid #ededed"></div><div class="t" style="left:244px;top:328px;color:#0000ee;text-decoration:underline">查看</div><div class="t" style="left:394px;top:328px">2022-08-29 15:16:08</div><div class="t" style="left:544px;top:328px">2022-08-29 15:16:11</div><div class="t" style="left:694px;top:328px">2022-08-29 15:26:20</div><div class="t" style="left:844px;top:328px">10</div><div class="t" style="left:924px;top:328px">7</div><div class="t" style="left:1004px;top:328px">1</div><div class="t" style="left:1084px;top:328px">16</div><div class="t" style="left:1164px;top:328px">2022-08-29 15:26:20</div><div class="a" style="left:238px;top:346px;width:1069px;height:22px;background:#fafafa;border-bottom:1px solid #ededed"></div><div class="t" style="left:244px;top:350px;color:#0000ee;text-decoration:underline">查看</div><div class="t" style="left:394px;top:350px">2022-08-29 15:09:41</div><div class="t" style="left:544px;top:350px">2022-08-29 15:09:43</div><div class="t" style="left:694px;top:350px">2022-08-29 15:16:05</div><div class="t" style="left:844px;top:350px">6</div><div class="t" style="left:924px;top:350px">4</div><div class="t" style="left:1004px;top:350px">1</div><div class="t" style="left:1084px;top:350px">6</div><div class="t" style="left:1164px;top:350px">2022-08-29 15:16:05</div><div class="a" style="left:238px;top:368px;width:1069px;height:22px;background:#fff;border-bottom:1px solid #ededed"></div><div class="t" style="left:244px;top:372px;color:#0000ee;text-decoration:underline">查看</div><div class="t" style="left:394px;top:372px">2022-08-29 15:08:54</div><div class="t" style="left:544px;top:372px">2022-08-29 15:08:54</div><div class="t" style="left:694px;top:372px">2022-08-29 15:08:54</div><div class="t" style="left:844px;top:372px">6</div><div class="t" style="left:924px;top:372px">0</div><div class="t" style="left:1004px;top:372px">0</div><div class="t" style="left:1084px;top:372px">0</div><div class="t" style="left:1164px;top:372px">2022-08-29 15:08:54</div><div class="a" style="left:206px;top:397px;width:1615px;height:22px;background:#fff;border-bottom:1px solid #ededed"></div><svg class="a" style="left:214px;top:403px" width="9" height="9" viewBox="0 0 9 9"><defs><linearGradient id="eg214_403" x1="0" y1="0" x2="0" y2="1"><stop offset="0" stop-color="#fdfdfe"/><stop offset="1" stop-color="#c3cedd"/></linearGradient></defs><rect x="0.5" y="0.5" width="8" height="8" rx="1" fill="url(#eg214_403)" stroke="#7d8ea8"/><path d="M1 8.5 H8.5 V1" fill="none" stroke="#3e5478" stroke-width="0.9"/><rect x="1.8" y="4" width="5.4" height="1" fill="#1c2a44"/><rect x="4" y="1.8" width="1" height="5.4" fill="#1c2a44"/></svg><div class="t" style="left:230px;top:401px;width:36px;text-align:right">3</div><div class="t" style="left:277px;top:401px">TS220829002</div><div class="t" style="left:377px;top:401px">2022-08-29 13:42:30</div><div class="t" style="left:727px;top:401px">河南公路工程局</div><div class="t" style="left:827px;top:401px">鸡商高速1-1厂...</div><div class="t" style="left:927px;top:401px">k7+055盖板涵...</div><div class="t" style="left:1027px;top:401px">第1仓</div><div class="t" style="left:1227px;top:401px">C35</div><div class="t" style="left:1327px;top:401px">180±20</div><div class="t" style="left:1427px;top:401px">0</div><div class="t" style="left:1527px;top:401px">0</div><div class="t" style="left:1627px;top:401px">0</div><div class="t" style="left:1727px;top:401px">0</div><div class="a" style="left:206px;top:419px;width:1615px;height:22px;background:#fafafa;border-bottom:1px solid #ededed"></div><svg class="a" style="left:214px;top:425px" width="9" height="9" viewBox="0 0 9 9"><defs><linearGradient id="eg214_425" x1="0" y1="0" x2="0" y2="1"><stop offset="0" stop-color="#fdfdfe"/><stop offset="1" stop-color="#c3cedd"/></linearGradient></defs><rect x="0.5" y="0.5" width="8" height="8" rx="1" fill="url(#eg214_425)" stroke="#7d8ea8"/><path d="M1 8.5 H8.5 V1" fill="none" stroke="#3e5478" stroke-width="0.9"/><rect x="1.8" y="4" width="5.4" height="1" fill="#1c2a44"/><rect x="4" y="1.8" width="1" height="5.4" fill="#1c2a44"/></svg><div class="t" style="left:230px;top:423px;width:36px;text-align:right">4</div><div class="t" style="left:277px;top:423px">TS220829001</div><div class="t" style="left:377px;top:423px">2022-08-29 13:30:21</div><div class="t" style="left:727px;top:423px">河南公路工程局</div><div class="t" style="left:827px;top:423px">鸡商高速1-1厂...</div><div class="t" style="left:927px;top:423px">k9+955盖板涵...</div><div class="t" style="left:1027px;top:423px">第7仓</div><div class="t" style="left:1227px;top:423px">C35</div><div class="t" style="left:1327px;top:423px">180±20</div><div class="t" style="left:1427px;top:423px">0</div><div class="t" style="left:1527px;top:423px">0</div><div class="t" style="left:1627px;top:423px">0</div><div class="t" style="left:1727px;top:423px">0</div><div class="a" style="left:206px;top:441px;width:1615px;height:22px;background:#fff;border-bottom:1px solid #ededed"></div><svg class="a" style="left:214px;top:447px" width="9" height="9" viewBox="0 0 9 9"><defs><linearGradient id="eg214_447" x1="0" y1="0" x2="0" y2="1"><stop offset="0" stop-color="#fdfdfe"/><stop offset="1" stop-color="#c3cedd"/></linearGradient></defs><rect x="0.5" y="0.5" width="8" height="8" rx="1" fill="url(#eg214_447)" stroke="#7d8ea8"/><path d="M1 8.5 H8.5 V1" fill="none" stroke="#3e5478" stroke-width="0.9"/><rect x="1.8" y="4" width="5.4" height="1" fill="#1c2a44"/><rect x="4" y="1.8" width="1" height="5.4" fill="#1c2a44"/></svg><div class="t" style="left:230px;top:445px;width:36px;text-align:right">5</div><div class="t" style="left:277px;top:445px">TS220828004</div><div class="t" style="left:377px;top:445px">2022-08-28 17:17:02</div><div class="t" style="left:727px;top:445px">河南公路工程局</div><div class="t" style="left:827px;top:445px">鸡商高速1-1厂...</div><div class="t" style="left:927px;top:445px">k7+485盖板涵...</div><div class="t" style="left:1027px;top:445px">第11仓</div><div class="t" style="left:1227px;top:445px">C35</div><div class="t" style="left:1327px;top:445px">180±20</div><div class="t" style="left:1427px;top:445px">0</div><div class="t" style="left:1527px;top:445px">0</div><div class="t" style="left:1627px;top:445px">3</div><div class="t" style="left:1727px;top:445px">32.5</div><div class="a" style="left:206px;top:463px;width:1615px;height:22px;background:#fafafa;border-bottom:1px solid #ededed"></div><svg class="a" style="left:214px;top:469px" width="9" height="9" viewBox="0 0 9 9"><defs><linearGradient id="eg214_469" x1="0" y1="0" x2="0" y2="1"><stop offset="0" stop-color="#fdfdfe"/><stop offset="1" stop-color="#c3cedd"/></linearGradient></defs><rect x="0.5" y="0.5" width="8" height="8" rx="1" fill="url(#eg214_469)" stroke="#7d8ea8"/><path d="M1 8.5 H8.5 V1" fill="none" stroke="#3e5478" stroke-width="0.9"/><rect x="1.8" y="4" width="5.4" height="1" fill="#1c2a44"/><rect x="4" y="1.8" width="1" height="5.4" fill="#1c2a44"/></svg><div class="t" style="left:230px;top:467px;width:36px;text-align:right">6</div><div class="t" style="left:277px;top:467px">TS220828003</div><div class="t" style="left:377px;top:467px">2022-08-28 15:20:53</div><div class="t" style="left:727px;top:467px">河南公路工程局</div><div class="t" style="left:827px;top:467px">鸡商高速1-1厂...</div><div class="t" style="left:927px;top:467px">k8+993.00九...</div><div class="t" style="left:1027px;top:467px">8-3立柱</div><div class="t" style="left:1227px;top:467px">C40</div><div class="t" style="left:1327px;top:467px">160-200</div><div class="t" style="left:1427px;top:467px">0</div><div class="t" style="left:1527px;top:467px">0</div><div class="t" style="left:1627px;top:467px">2</div><div class="t" style="left:1727px;top:467px">16</div><div class="a" style="left:206px;top:485px;width:1615px;height:22px;background:#fff;border-bottom:1px solid #ededed"></div><svg class="a" style="left:214px;top:491px" width="9" height="9" viewBox="0 0 9 9"><defs><linearGradient id="eg214_491" x1="0" y1="0" x2="0" y2="1"><stop offset="0" stop-color="#fdfdfe"/><stop offset="1" stop-color="#c3cedd"/></linearGradient></defs><rect x="0.5" y="0.5" width="8" height="8" rx="1" fill="url(#eg214_491)" stroke="#7d8ea8"/><path d="M1 8.5 H8.5 V1" fill="none" stroke="#3e5478" stroke-width="0.9"/><rect x="1.8" y="4" width="5.4" height="1" fill="#1c2a44"/><rect x="4" y="1.8" width="1" height="5.4" fill="#1c2a44"/></svg><div class="t" style="left:230px;top:489px;width:36px;text-align:right">7</div><div class="t" style="left:277px;top:489px">TS220828002</div><div class="t" style="left:377px;top:489px">2022-08-28 14:02:06</div><div class="t" style="left:727px;top:489px">河南公路工程局</div><div class="t" style="left:827px;top:489px">鸡商高速1-1厂...</div><div class="t" style="left:927px;top:489px">k5+424盖板涵...</div><div class="t" style="left:1027px;top:489px">第8仓</div><div class="t" style="left:1227px;top:489px">C35</div><div class="t" style="left:1327px;top:489px">180±20</div><div class="t" style="left:1427px;top:489px">0</div><div class="t" style="left:1527px;top:489px">0</div><div class="t" style="left:1627px;top:489px">1</div><div class="t" style="left:1727px;top:489px">11</div><div class="a" style="left:206px;top:507px;width:1615px;height:22px;background:#fafafa;border-bottom:1px solid #ededed"></div><svg class="a" style="left:214px;top:513px" width="9" height="9" viewBox="0 0 9 9"><defs><linearGradient id="eg214_513" x1="0" y1="0" x2="0" y2="1"><stop offset="0" stop-color="#fdfdfe"/><stop offset="1" stop-color="#c3cedd"/></linearGradient></defs><rect x="0.5" y="0.5" width="8" height="8" rx="1" fill="url(#eg214_513)" stroke="#7d8ea8"/><path d="M1 8.5 H8.5 V1" fill="none" stroke="#3e5478" stroke-width="0.9"/><rect x="1.8" y="4" width="5.4" height="1" fill="#1c2a44"/><rect x="4" y="1.8" width="1" height="5.4" fill="#1c2a44"/></svg><div class="t" style="left:230px;top:511px;width:36px;text-align:right">8</div><div class="t" style="left:277px;top:511px">TS220828001</div><div class="t" style="left:377px;top:511px">2022-08-28 13:35:15</div><div class="t" style="left:727px;top:511px">河南公路工程局</div><div class="t" style="left:827px;top:511px">鸡商高速1-1厂...</div><div class="t" style="left:927px;top:511px">k7+055盖板涵...</div><div class="t" style="left:1027px;top:511px">第7仓</div><div class="t" style="left:1227px;top:511px">C30</div><div class="t" style="left:1327px;top:511px">180-200</div><div class="t" style="left:1427px;top:511px">0</div><div class="t" style="left:1527px;top:511px">0</div><div class="t" style="left:1627px;top:511px">2</div><div class="t" style="left:1727px;top:511px">20.1</div><div class="a" style="left:206px;top:529px;width:1615px;height:22px;background:#fff;border-bottom:1px solid #ededed"></div><svg class="a" style="left:214px;top:535px" width="9" height="9" viewBox="0 0 9 9"><defs><linearGradient id="eg214_535" x1="0" y1="0" x2="0" y2="1"><stop offset="0" stop-color="#fdfdfe"/><stop offset="1" stop-color="#c3cedd"/></linearGradient></defs><rect x="0.5" y="0.5" width="8" height="8" rx="1" fill="url(#eg214_535)" stroke="#7d8ea8"/><path d="M1 8.5 H8.5 V1" fill="none" stroke="#3e5478" stroke-width="0.9"/><rect x="1.8" y="4" width="5.4" height="1" fill="#1c2a44"/><rect x="4" y="1.8" width="1" height="5.4" fill="#1c2a44"/></svg><div class="t" style="left:230px;top:533px;width:36px;text-align:right">9</div><div class="t" style="left:277px;top:533px">TS220826003</div><div class="t" style="left:377px;top:533px">2022-08-26 19:10:44</div><div class="t" style="left:727px;top:533px">河南公路工程局</div><div class="t" style="left:827px;top:533px">鸡商高速1-1厂...</div><div class="t" style="left:927px;top:533px">k8+993.00九...</div><div class="t" style="left:1027px;top:533px">8#右幅底系梁</div><div class="t" style="left:1227px;top:533px">C30</div><div class="t" style="left:1327px;top:533px">180-200</div><div class="t" style="left:1427px;top:533px">0</div><div class="t" style="left:1527px;top:533px">0</div><div class="t" style="left:1627px;top:533px">1</div><div class="t" style="left:1727px;top:533px">18</div><div class="a" style="left:206px;top:551px;width:1615px;height:22px;background:#fafafa;border-bottom:1px solid #ededed"></div><svg class="a" style="left:214px;top:557px" width="9" height="9" viewBox="0 0 9 9"><defs><linearGradient id="eg214_557" x1="0" y1="0" x2="0" y2="1"><stop offset="0" stop-color="#fdfdfe"/><stop offset="1" stop-color="#c3cedd"/></linearGradient></defs><rect x="0.5" y="0.5" width="8" height="8" rx="1" fill="url(#eg214_557)" stroke="#7d8ea8"/><path d="M1 8.5 H8.5 V1" fill="none" stroke="#3e5478" stroke-width="0.9"/><rect x="1.8" y="4" width="5.4" height="1" fill="#1c2a44"/><rect x="4" y="1.8" width="1" height="5.4" fill="#1c2a44"/></svg><div class="t" style="left:230px;top:555px;width:36px;text-align:right">10</div><div class="t" style="left:277px;top:555px">TS220826002</div><div class="t" style="left:377px;top:555px">2022-08-26 17:45:03</div><div class="t" style="left:727px;top:555px">河南公路工程局</div><div class="t" style="left:827px;top:555px">鸡商高速1-1厂...</div><div class="t" style="left:927px;top:555px">k7+485盖板涵...</div><div class="t" style="left:1027px;top:555px">第10仓</div><div class="t" style="left:1227px;top:555px">C35</div><div class="t" style="left:1327px;top:555px">180±20</div><div class="t" style="left:1427px;top:555px">0</div><div class="t" style="left:1527px;top:555px">0</div><div class="t" style="left:1627px;top:555px">3</div><div class="t" style="left:1727px;top:555px">32.5</div><div class="a" style="left:206px;top:573px;width:1615px;height:22px;background:#fff;border-bottom:1px solid #ededed"></div><svg class="a" style="left:214px;top:579px" width="9" height="9" viewBox="0 0 9 9"><defs><linearGradient id="eg214_579" x1="0" y1="0" x2="0" y2="1"><stop offset="0" stop-color="#fdfdfe"/><stop offset="1" stop-color="#c3cedd"/></linearGradient></defs><rect x="0.5" y="0.5" width="8" height="8" rx="1" fill="url(#eg214_579)" stroke="#7d8ea8"/><path d="M1 8.5 H8.5 V1" fill="none" stroke="#3e5478" stroke-width="0.9"/><rect x="1.8" y="4" width="5.4" height="1" fill="#1c2a44"/><rect x="4" y="1.8" width="1" height="5.4" fill="#1c2a44"/></svg><div class="t" style="left:230px;top:577px;width:36px;text-align:right">11</div><div class="t" style="left:277px;top:577px">TS220826001</div><div class="t" style="left:377px;top:577px">2022-08-26 13:34:41</div><div class="t" style="left:727px;top:577px">河南公路工程局</div><div class="t" style="left:827px;top:577px">鸡商高速1-1厂...</div><div class="t" style="left:927px;top:577px">k7+055盖板涵...</div><div class="t" style="left:1027px;top:577px">第6仓</div><div class="t" style="left:1227px;top:577px">C30</div><div class="t" style="left:1327px;top:577px">180-200</div><div class="t" style="left:1427px;top:577px">0</div><div class="t" style="left:1527px;top:577px">0</div><div class="t" style="left:1627px;top:577px">4</div><div class="t" style="left:1727px;top:577px">30</div><div class="a" style="left:206px;top:595px;width:1615px;height:22px;background:#fafafa;border-bottom:1px solid #ededed"></div><svg class="a" style="left:214px;top:601px" width="9" height="9" viewBox="0 0 9 9"><defs><linearGradient id="eg214_601" x1="0" y1="0" x2="0" y2="1"><stop offset="0" stop-color="#fdfdfe"/><stop offset="1" stop-color="#c3cedd"/></linearGradient></defs><rect x="0.5" y="0.5" width="8" height="8" rx="1" fill="url(#eg214_601)" stroke="#7d8ea8"/><path d="M1 8.5 H8.5 V1" fill="none" stroke="#3e5478" stroke-width="0.9"/><rect x="1.8" y="4" width="5.4" height="1" fill="#1c2a44"/><rect x="4" y="1.8" width="1" height="5.4" fill="#1c2a44"/></svg><div class="t" style="left:230px;top:599px;width:36px;text-align:right">12</div><div class="t" style="left:277px;top:599px">TS220825005</div><div class="t" style="left:377px;top:599px">2022-08-25 18:35:09</div><div class="t" style="left:727px;top:599px">河南公路工程局</div><div class="t" style="left:827px;top:599px">鸡商高速1-1厂...</div><div class="t" style="left:927px;top:599px">k9+955盖板涵...</div><div class="t" style="left:1027px;top:599px">第2仓</div><div class="t" style="left:1227px;top:599px">C35</div><div class="t" style="left:1327px;top:599px">180±20</div><div class="t" style="left:1427px;top:599px">0</div><div class="t" style="left:1527px;top:599px">0</div><div class="t" style="left:1627px;top:599px">1</div><div class="t" style="left:1727px;top:599px">16.5</div><div class="a" style="left:206px;top:617px;width:1615px;height:22px;background:#fff;border-bottom:1px solid #ededed"></div><svg class="a" style="left:214px;top:623px" width="9" height="9" viewBox="0 0 9 9"><defs><linearGradient id="eg214_623" x1="0" y1="0" x2="0" y2="1"><stop offset="0" stop-color="#fdfdfe"/><stop offset="1" stop-color="#c3cedd"/></linearGradient></defs><rect x="0.5" y="0.5" width="8" height="8" rx="1" fill="url(#eg214_623)" stroke="#7d8ea8"/><path d="M1 8.5 H8.5 V1" fill="none" stroke="#3e5478" stroke-width="0.9"/><rect x="1.8" y="4" width="5.4" height="1" fill="#1c2a44"/><rect x="4" y="1.8" width="1" height="5.4" fill="#1c2a44"/></svg><div class="t" style="left:230px;top:621px;width:36px;text-align:right">13</div><div class="t" style="left:277px;top:621px">TS220825004</div><div class="t" style="left:377px;top:621px">2022-08-25 13:26:50</div><div class="t" style="left:727px;top:621px">河南公路工程局</div><div class="t" style="left:827px;top:621px">鸡商高速1-1厂...</div><div class="t" style="left:927px;top:621px">k7+055盖板涵...</div><div class="t" style="left:1027px;top:621px">第5仓</div><div class="t" style="left:1227px;top:621px">C30</div><div class="t" style="left:1327px;top:621px">180-200</div><div class="t" style="left:1427px;top:621px">0</div><div class="t" style="left:1527px;top:621px">0</div><div class="t" style="left:1627px;top:621px">3</div><div class="t" style="left:1727px;top:621px">29.5</div><div class="a" style="left:206px;top:639px;width:1615px;height:22px;background:#fafafa;border-bottom:1px solid #ededed"></div><svg class="a" style="left:214px;top:645px" width="9" height="9" viewBox="0 0 9 9"><defs><linearGradient id="eg214_645" x1="0" y1="0" x2="0" y2="1"><stop offset="0" stop-color="#fdfdfe"/><stop offset="1" stop-color="#c3cedd"/></linearGradient></defs><rect x="0.5" y="0.5" width="8" height="8" rx="1" fill="url(#eg214_645)" stroke="#7d8ea8"/><path d="M1 8.5 H8.5 V1" fill="none" stroke="#3e5478" stroke-width="0.9"/><rect x="1.8" y="4" width="5.4" height="1" fill="#1c2a44"/><rect x="4" y="1.8" width="1" height="5.4" fill="#1c2a44"/></svg><div class="t" style="left:230px;top:643px;width:36px;text-align:right">14</div><div class="t" style="left:277px;top:643px">TS220825003</div><div class="t" style="left:377px;top:643px">2022-08-25 13:16:15</div><div class="t" style="left:727px;top:643px">河南公路工程局</div><div class="t" style="left:827px;top:643px">鸡商高速1-1厂...</div><div class="t" style="left:927px;top:643px">k8+993.00九...</div><div class="t" style="left:1027px;top:643px">14-3.14-4立柱</div><div class="t" style="left:1227px;top:643px">C40</div><div class="t" style="left:1327px;top:643px">160-200</div><div class="t" style="left:1427px;top:643px">0</div><div class="t" style="left:1527px;top:643px">0</div><div class="t" style="left:1627px;top:643px">4</div><div class="t" style="left:1727px;top:643px">33.5</div><div class="a" style="left:206px;top:661px;width:1615px;height:22px;background:#fff;border-bottom:1px solid #ededed"></div><svg class="a" style="left:214px;top:667px" width="9" height="9" viewBox="0 0 9 9"><defs><linearGradient id="eg214_667" x1="0" y1="0" x2="0" y2="1"><stop offset="0" stop-color="#fdfdfe"/><stop offset="1" stop-color="#c3cedd"/></linearGradient></defs><rect x="0.5" y="0.5" width="8" height="8" rx="1" fill="url(#eg214_667)" stroke="#7d8ea8"/><path d="M1 8.5 H8.5 V1" fill="none" stroke="#3e5478" stroke-width="0.9"/><rect x="1.8" y="4" width="5.4" height="1" fill="#1c2a44"/><rect x="4" y="1.8" width="1" height="5.4" fill="#1c2a44"/></svg><div class="t" style="left:230px;top:665px;width:36px;text-align:right">15</div><div class="t" style="left:277px;top:665px">TS220825002</div><div class="t" style="left:377px;top:665px">2022-08-25 12:58:16</div><div class="t" style="left:727px;top:665px">河南公路工程局</div><div class="t" style="left:827px;top:665px">鸡商高速1-1厂...</div><div class="t" style="left:927px;top:665px">k4+930盖板涵...</div><div class="t" style="left:1027px;top:665px">第8仓</div><div class="t" style="left:1227px;top:665px">C30</div><div class="t" style="left:1327px;top:665px">180-200</div><div class="t" style="left:1427px;top:665px">0</div><div class="t" style="left:1527px;top:665px">0</div><div class="t" style="left:1627px;top:665px">2</div><div class="t" style="left:1727px;top:665px">21</div><div class="a" style="left:206px;top:683px;width:1615px;height:22px;background:#fafafa;border-bottom:1px solid #ededed"></div><svg class="a" style="left:214px;top:689px" width="9" height="9" viewBox="0 0 9 9"><defs><linearGradient id="eg214_689" x1="0" y1="0" x2="0" y2="1"><stop offset="0" stop-color="#fdfdfe"/><stop offset="1" stop-color="#c3cedd"/></linearGradient></defs><rect x="0.5" y="0.5" width="8" height="8" rx="1" fill="url(#eg214_689)" stroke="#7d8ea8"/><path d="M1 8.5 H8.5 V1" fill="none" stroke="#3e5478" stroke-width="0.9"/><rect x="1.8" y="4" width="5.4" height="1" fill="#1c2a44"/><rect x="4" y="1.8" width="1" height="5.4" fill="#1c2a44"/></svg><div class="t" style="left:230px;top:687px;width:36px;text-align:right">16</div><div class="t" style="left:277px;top:687px">TS220825001</div><div class="t" style="left:377px;top:687px">2022-08-25 10:49:50</div><div class="t" style="left:727px;top:687px">河南公路工程局</div><div class="t" style="left:827px;top:687px">鸡商高速1-1厂...</div><div class="t" style="left:927px;top:687px">k8+993.00九...</div><div class="t" style="left:1027px;top:687px">8-3.8-4垫层</div><div class="t" style="left:1227px;top:687px">C30</div><div class="t" style="left:1327px;top:687px">180-200</div><div class="t" style="left:1427px;top:687px">0</div><div class="t" style="left:1527px;top:687px">0</div><div class="t" style="left:1627px;top:687px">1</div><div class="t" style="left:1727px;top:687px">2</div><div class="a" style="left:206px;top:705px;width:1615px;height:22px;background:#fff;border-bottom:1px solid #ededed"></div><svg class="a" style="left:214px;top:711px" width="9" height="9" viewBox="0 0 9 9"><defs><linearGradient id="eg214_711" x1="0" y1="0" x2="0" y2="1"><stop offset="0" stop-color="#fdfdfe"/><stop offset="1" stop-color="#c3cedd"/></linearGradient></defs><rect x="0.5" y="0.5" width="8" height="8" rx="1" fill="url(#eg214_711)" stroke="#7d8ea8"/><path d="M1 8.5 H8.5 V1" fill="none" stroke="#3e5478" stroke-width="0.9"/><rect x="1.8" y="4" width="5.4" height="1" fill="#1c2a44"/><rect x="4" y="1.8" width="1" height="5.4" fill="#1c2a44"/></svg><div class="t" style="left:230px;top:709px;width:36px;text-align:right">17</div><div class="t" style="left:277px;top:709px">TS220823004</div><div class="t" style="left:377px;top:709px">2022-08-23 16:37:15</div><div class="t" style="left:727px;top:709px">河南公路工程局</div><div class="t" style="left:827px;top:709px">鸡商高速1-1厂...</div><div class="t" style="left:927px;top:709px">k6+458明月山...</div><div class="t" style="left:1027px;top:709px">左幅10-1.10-2...</div><div class="t" style="left:1227px;top:709px">C40</div><div class="t" style="left:1327px;top:709px">160-200</div><div class="t" style="left:1427px;top:709px">0</div><div class="t" style="left:1527px;top:709px">0</div><div class="t" style="left:1627px;top:709px">1</div><div class="t" style="left:1727px;top:709px">10.5</div><div class="a" style="left:206px;top:727px;width:1615px;height:22px;background:#fafafa;border-bottom:1px solid #ededed"></div><svg class="a" style="left:214px;top:733px" width="9" height="9" viewBox="0 0 9 9"><defs><linearGradient id="eg214_733" x1="0" y1="0" x2="0" y2="1"><stop offset="0" stop-color="#fdfdfe"/><stop offset="1" stop-color="#c3cedd"/></linearGradient></defs><rect x="0.5" y="0.5" width="8" height="8" rx="1" fill="url(#eg214_733)" stroke="#7d8ea8"/><path d="M1 8.5 H8.5 V1" fill="none" stroke="#3e5478" stroke-width="0.9"/><rect x="1.8" y="4" width="5.4" height="1" fill="#1c2a44"/><rect x="4" y="1.8" width="1" height="5.4" fill="#1c2a44"/></svg><div class="t" style="left:230px;top:731px;width:36px;text-align:right">18</div><div class="t" style="left:277px;top:731px">TS220823003</div><div class="t" style="left:377px;top:731px">2022-08-23 16:10:59</div><div class="t" style="left:727px;top:731px">河南公路工程局</div><div class="t" style="left:827px;top:731px">鸡商高速1-1厂...</div><div class="t" style="left:927px;top:731px">k5+424盖板涵...</div><div class="t" style="left:1027px;top:731px">第7.9仓</div><div class="t" style="left:1227px;top:731px">C35</div><div class="t" style="left:1327px;top:731px">180±20</div><div class="t" style="left:1427px;top:731px">0</div><div class="t" style="left:1527px;top:731px">0</div><div class="t" style="left:1627px;top:731px">2</div><div class="t" style="left:1727px;top:731px">21.5</div><div class="a" style="left:206px;top:749px;width:1615px;height:22px;background:#fff;border-bottom:1px solid #ededed"></div><svg class="a" style="left:214px;top:755px" width="9" height="9" viewBox="0 0 9 9"><defs><linearGradient id="eg214_755" x1="0" y1="0" x2="0" y2="1"><stop offset="0" stop-color="#fdfdfe"/><stop offset="1" stop-color="#c3cedd"/></linearGradient></defs><rect x="0.5" y="0.5" width="8" height="8" rx="1" fill="url(#eg214_755)" stroke="#7d8ea8"/><path d="M1 8.5 H8.5 V1" fill="none" stroke="#3e5478" stroke-width="0.9"/><rect x="1.8" y="4" width="5.4" height="1" fill="#1c2a44"/><rect x="4" y="1.8" width="1" height="5.4" fill="#1c2a44"/></svg><div class="t" style="left:230px;top:753px;width:36px;text-align:right">19</div><div class="t" style="left:277px;top:753px">TS220823002</div><div class="t" style="left:377px;top:753px">2022-08-23 14:11:15</div><div class="t" style="left:727px;top:753px">河南公路工程局</div><div class="t" style="left:827px;top:753px">鸡商高速1-1厂...</div><div class="t" style="left:927px;top:753px">k7+485盖板涵...</div><div class="t" style="left:1027px;top:753px">第8仓</div><div class="t" style="left:1227px;top:753px">C35</div><div class="t" style="left:1327px;top:753px">180±20</div><div class="t" style="left:1427px;top:753px">0</div><div class="t" style="left:1527px;top:753px">32</div><div class="t" style="left:1627px;top:753px">1</div><div class="t" style="left:1727px;top:753px">10.5</div><div class="a" style="left:206px;top:771px;width:1615px;height:22px;background:#fafafa;border-bottom:1px solid #ededed"></div><svg class="a" style="left:214px;top:777px" width="9" height="9" viewBox="0 0 9 9"><defs><linearGradient id="eg214_777" x1="0" y1="0" x2="0" y2="1"><stop offset="0" stop-color="#fdfdfe"/><stop offset="1" stop-color="#c3cedd"/></linearGradient></defs><rect x="0.5" y="0.5" width="8" height="8" rx="1" fill="url(#eg214_777)" stroke="#7d8ea8"/><path d="M1 8.5 H8.5 V1" fill="none" stroke="#3e5478" stroke-width="0.9"/><rect x="1.8" y="4" width="5.4" height="1" fill="#1c2a44"/><rect x="4" y="1.8" width="1" height="5.4" fill="#1c2a44"/></svg><div class="t" style="left:230px;top:775px;width:36px;text-align:right">20</div><div class="t" style="left:277px;top:775px">TS220823001</div><div class="t" style="left:377px;top:775px">2022-08-23 14:10:30</div><div class="t" style="left:727px;top:775px">河南公路工程局</div><div class="t" style="left:827px;top:775px">鸡商高速1-1厂...</div><div class="t" style="left:927px;top:775px">k7+055盖板涵...</div><div class="t" style="left:1027px;top:775px">第3仓</div><div class="t" style="left:1227px;top:775px">C30</div><div class="t" style="left:1327px;top:775px">180-200</div><div class="t" style="left:1427px;top:775px">0</div><div class="t" style="left:1527px;top:775px">29</div><div class="t" style="left:1627px;top:775px">3</div><div class="t" style="left:1727px;top:775px">29</div><div class="a" style="left:206px;top:829px;width:1712px;height:31px;background:linear-gradient(#dce6f4,#d0def0);border-top:1px solid #99bbe8;border-bottom:2px solid #99bbe8"></div><svg class="a" style="left:213px;top:836px" width="14" height="16" viewBox="0 0 14 16"><rect x="2" y="2" width="2" height="12" fill="#b8bcc2"/><path d="M12 2 L5 8 L12 14z" fill="#b8bcc2"/></svg><div class="a" style="left:210px;top:833px;width:20px;height:21px;border:1px solid #d6dee8;border-radius:3px;opacity:0.6"></div><div class="a" style="left:233px;top:833px;width:21px;height:21px;border:1px solid #d6dee8;border-radius:3px;opacity:0.6"></div><svg class="a" style="left:238px;top:836px" width="12" height="16" viewBox="0 0 12 16"><path d="M8 2 L2 8 L8 13.5z" fill="#bcbcbc" stroke="#a8a8a8" stroke-width="0.6"/></svg><div class="a" style="left:257px;top:837px;width:1px;height:14px;background:#8fb4ea"></div><div class="a" style="left:258px;top:837px;width:1px;height:14px;background:#fff"></div><div class="t" style="left:265px;top:838px;color:#333">第</div><div class="a" style="left:285px;top:833px;width:30px;height:22px;border:1px solid #b5b8c8;background:#fff"></div><div class="t" style="left:290px;top:838px;">1</div><div class="t" style="left:321px;top:838px;color:#333">页<span style="margin-left:-1px;margin-right:-1px">，</span>共 20 页</div><div class="a" style="left:396px;top:837px;width:1px;height:14px;background:#8fb4ea"></div><div class="a" style="left:397px;top:837px;width:1px;height:14px;background:#fff"></div><svg class="a" style="left:404px;top:836px" width="12" height="16" viewBox="0 0 12 16"><path d="M4 3 L10 8 L4 13z" fill="#2e6fd6"/></svg><svg class="a" style="left:427px;top:836px" width="14" height="16" viewBox="0 0 14 16"><path d="M3 2 L10 8 L3 14z" fill="#2e6fd6"/><rect x="10" y="2" width="2.2" height="12" fill="#2e6fd6"/></svg><div class="t" style="left:1611px;top:838px;width:300px;text-align:right;color:#222">显示 1 - 20 条，共 381 条</div><div class="a" style="left:1905px;top:335px;width:11px;height:86px;border-radius:5px;background:#5e5e5e;box-shadow:0 0 1px #999"></div><div class="a" style="left:1907px;top:387px;width:7px;height:1px;background:#5fdc5f"></div><div class="a" style="left:1907px;top:390px;width:7px;height:1px;background:#5fdc5f"></div><div class="a" style="left:1907px;top:393px;width:7px;height:1px;background:#5fdc5f"></div><div class="a" style="left:1907px;top:396px;width:7px;height:1px;background:#5fdc5f"></div><div class="a" style="left:1907px;top:399px;width:7px;height:1px;background:#5fdc5f"></div><div class="a" style="left:1907px;top:402px;width:7px;height:1px;background:#5fdc5f"></div><div class="a" style="left:1907px;top:405px;width:7px;height:1px;background:#5fdc5f"></div><div class="a" style="left:1907px;top:408px;width:7px;height:1px;background:#5fdc5f"></div><div class="a" style="left:1907px;top:411px;width:7px;height:1px;background:#5fdc5f"></div><div class="a" style="left:1907px;top:414px;width:7px;height:1px;background:#5fdc5f"></div></body></html>
